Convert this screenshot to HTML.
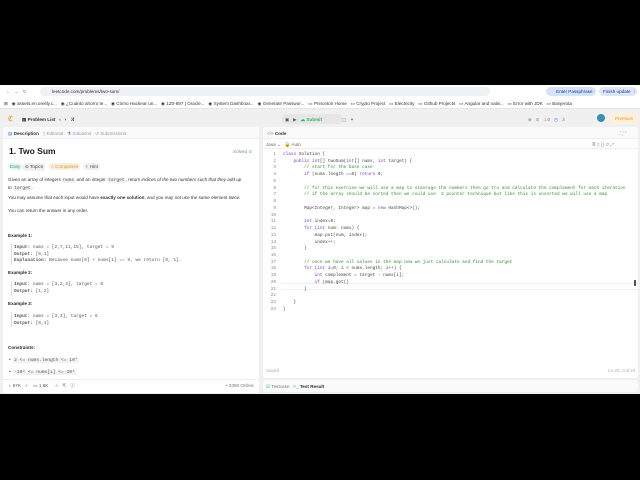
<!DOCTYPE html>
<html><head><meta charset="utf-8"><style>
*{margin:0;padding:0;box-sizing:border-box}
body{width:640px;height:480px;background:#000;position:relative;overflow:hidden;font-family:"Liberation Sans",sans-serif;color:#262626}
.a{position:absolute;white-space:nowrap}
#br{position:absolute;left:0;top:85px;width:640px;height:309px;background:#f0f0f0}
.t{font-size:4.6px}
.mono{font-family:"Liberation Mono",monospace}
.code{font-size:4.4px;font-family:"Liberation Mono",monospace;line-height:6.74px}
.ln{color:#888;text-align:right;width:10px}
.k{color:#7a3ec1}.c{color:#3a8a3a}.n{color:#444}
.cd{background:#f2f2f2;border-radius:1px;padding:0 1px;color:#555}
</style></head><body>
<div id="br"></div>
<div class="a" style="left:0;top:85px;width:640px;height:13px;background:#fff"></div>
<div class="a t" style="left:6px;top:89px;color:#777">←&nbsp;&nbsp;&nbsp;→&nbsp;&nbsp;&nbsp;↻</div>
<div class="a" style="left:40px;top:87px;width:450px;height:9px;background:#eef1f6;border-radius:5px"></div>
<div class="a t" style="left:52px;top:89px;color:#333">leetcode.com/problems/two-sum/</div>
<div class="a" style="left:546px;top:87px;width:50px;height:9px;background:#d6e2fb;border-radius:5px"></div>
<div class="a t" style="left:556px;top:89px;color:#1a3d7c">Enter Passphrase</div>
<div class="a" style="left:599px;top:87px;width:38px;height:9px;background:#dde6f7;border-radius:5px"></div>
<div class="a t" style="left:603px;top:89px;color:#1a3d7c">Finish update ⋮</div>
<div class="a" style="left:0;top:98px;width:640px;height:11px;background:#fff;border-bottom:1px solid #e5e5e5"></div>
<div class="a t" style="left:4px;top:101px;color:#333;word-spacing:0">⊞&nbsp;&nbsp;&nbsp;◉ assets.en.oreilly.c...&nbsp;&nbsp;&nbsp;◉ ¿Cuánto ahorro te...&nbsp;&nbsp;&nbsp;◉ Cómo Hackear un...&nbsp;&nbsp;&nbsp;◉ 1Z0-897 | Oracle...&nbsp;&nbsp;&nbsp;◉ System Dashboar...&nbsp;&nbsp;&nbsp;◉ Generate Passwor...&nbsp;&nbsp;&nbsp;▭ Princeton Home&nbsp;&nbsp;&nbsp;▭ Crypto Project&nbsp;&nbsp;&nbsp;▭ Electricity&nbsp;&nbsp;&nbsp;▭ Github Projects&nbsp;&nbsp;&nbsp;▭ Angular and nativ...&nbsp;&nbsp;&nbsp;▭ Error with JDK&nbsp;&nbsp;&nbsp;▭ Banjerota</div>
<div class="a" style="left:8px;top:115px;font-size:7px;color:#e8a33b;font-weight:bold">ℭ</div>
<div class="a t" style="left:22px;top:117px;color:#333;font-weight:bold">▤ Problem List&nbsp;&nbsp;&nbsp;‹&nbsp;&nbsp;&nbsp;›&nbsp;&nbsp;&nbsp;⤨</div>
<div class="a" style="left:282px;top:114px;width:60px;height:10px;background:#e6e6e6;border-radius:3px"></div>
<div class="a t" style="left:285px;top:117px;color:#555">▣&nbsp;&nbsp;&nbsp;▶&nbsp;&nbsp;&nbsp;<span style="color:#2db55d;font-weight:bold">☁ Submit</span></div>
<div class="a t" style="left:342px;top:117px;color:#666">▢&nbsp;&nbsp;&nbsp;<span style="color:#4f6df0">✦</span></div>
<div class="a t" style="left:528px;top:117px;color:#777">⊛&nbsp;&nbsp;&nbsp;⊙&nbsp;&nbsp;&nbsp;♨0&nbsp;&nbsp;&nbsp;<span style="color:#2f80ed">◷</span>&nbsp;&nbsp;&nbsp;♙</div>
<div class="a" style="left:597px;top:114px;width:8px;height:8px;border-radius:50%;background:#3b8fb5"></div>
<div class="a" style="left:610px;top:113px;width:28px;height:11px;background:#fdf0dc;border-radius:3px"></div>
<div class="a t" style="left:615px;top:116px;color:#e39a2a">Premium</div>
<div class="a" style="left:3px;top:127px;width:256px;height:266px;background:#fff;border-radius:3px"></div>
<div class="a" style="left:3px;top:127px;width:256px;height:12px;background:#fafafa;border-bottom:1px solid #eee;border-radius:3px 3px 0 0"></div>
<div class="a t" style="left:8px;top:131px;color:#999"><span style="color:#2f80ed">▤</span> <b style="color:#333">Description</b>&nbsp;&nbsp;&nbsp;<span style="color:#e8a33b">▯</span> Editorial&nbsp;&nbsp;&nbsp;<span style="color:#2f80ed">⚗</span> Solutions&nbsp;&nbsp;&nbsp;↺ Submissions</div>
<div class="a" style="left:9px;top:146px;font-size:8.5px;font-weight:bold;color:#1a1a1a">1. Two Sum</div>
<div class="a t" style="left:233px;top:149px;color:#888">Solved <span style="color:#2db55d">⊙</span></div>
<div class="a t" style="left:8px;top:163px;color:#2a9c8f;background:#e9f5f3;padding:1px 2px;border-radius:3px">Easy</div>
<div class="a t" style="left:23px;top:163px;color:#444;background:#f0f0f0;padding:1px 2px;border-radius:3px">⊘ Topics</div>
<div class="a t" style="left:49px;top:163px;color:#d89a2f;background:#f7efe0;padding:1px 2px;border-radius:3px">⌂ Companies</div>
<div class="a t" style="left:83px;top:163px;color:#444;background:#f0f0f0;padding:1px 2px;border-radius:3px">♀ Hint</div>
<div class="a t" style="left:8px;top:176px;line-height:7px;color:#333">Given an array of integers <span class="cd mono">nums</span> and an integer <span class="cd mono">target</span>, return <i>indices of the two numbers such that they add up</i><br><i>to</i> <span class="cd mono">target</span>.</div>
<div class="a t" style="left:8px;top:195px;color:#333">You may assume that each input would have <b>exactly one solution</b>, and you may not use the same element twice.</div>
<div class="a t" style="left:8px;top:208px;color:#333">You can return the answer in any order.</div>
<div class="a t" style="left:8px;top:233px;font-weight:bold">Example 1:</div>
<div class="a" style="left:11px;top:243px;width:1px;height:22px;background:#ddd"></div>
<div class="a mono" style="left:14px;top:245px;font-size:4.5px;line-height:6.5px;color:#555"><b>Input:</b> nums = [2,7,11,15], target = 9<br><b>Output:</b> [0,1]<br><b>Explanation:</b> Because nums[0] + nums[1] == 9, we return [0, 1].</div>
<div class="a t" style="left:8px;top:270px;font-weight:bold">Example 2:</div>
<div class="a" style="left:11px;top:281px;width:1px;height:15px;background:#ddd"></div>
<div class="a mono" style="left:14px;top:282px;font-size:4.5px;line-height:6.5px;color:#555"><b>Input:</b> nums = [3,2,4], target = 6<br><b>Output:</b> [1,2]</div>
<div class="a t" style="left:8px;top:301px;font-weight:bold">Example 3:</div>
<div class="a" style="left:11px;top:312px;width:1px;height:15px;background:#ddd"></div>
<div class="a mono" style="left:14px;top:314px;font-size:4.5px;line-height:6.5px;color:#555"><b>Input:</b> nums = [3,3], target = 6<br><b>Output:</b> [0,1]</div>
<div class="a t" style="left:8px;top:345px;font-weight:bold">Constraints:</div>
<div class="a t" style="left:9px;top:357px;color:#555">•&nbsp; <span class="cd mono">2 &lt;= nums.length &lt;= 10⁴</span></div>
<div class="a t" style="left:9px;top:369px;color:#555">•&nbsp; <span class="cd mono">-10⁹ &lt;= nums[i] &lt;= 10⁹</span></div>
<div class="a" style="left:3px;top:379px;width:256px;height:1px;background:#eee"></div>
<div class="a t" style="left:8px;top:383px;color:#555">♁ 67K&nbsp;&nbsp;&nbsp;♁&nbsp;&nbsp;&nbsp;&nbsp;▭ 1.6K&nbsp;&nbsp;&nbsp;&nbsp;&nbsp;☆&nbsp;&nbsp;&nbsp;⇱&nbsp;&nbsp;&nbsp;ⓘ</div>
<div class="a t" style="left:226px;top:383px;color:#777"><span style="color:#2db55d">•</span> 3380 Online</div>
<div class="a" style="left:263px;top:127px;width:375px;height:251px;background:#fff;border-radius:3px"></div>
<div class="a" style="left:263px;top:127px;width:375px;height:12px;background:#fafafa;border-bottom:1px solid #eee;border-radius:3px 3px 0 0"></div>
<div class="a t" style="left:267px;top:131px;color:#333"><span style="color:#2db55d">&lt;/&gt;</span> <b>Code</b></div>
<div class="a t" style="left:620px;top:131px;color:#999">⛶ ⌃</div>
<div class="a t" style="left:266px;top:142px;color:#666">Java ⌄&nbsp;&nbsp;&nbsp;🔒 Auto</div>
<div class="a t" style="left:592px;top:142px;color:#888">≣ ▯ {} ↺ ⤢</div>
<div class="a" style="left:263px;top:148px;width:375px;height:1px;background:#eee"></div>
<div class="a" style="left:281px;top:283px;width:357px;height:7px;border-top:1px solid #eee;border-bottom:1px solid #eee"></div>
<div class="a code ln" style="left:266px;top:152px">1<br>2<br>3<br>4<br>5<br>6<br>7<br>8<br>9<br>10<br>11<br>12<br>13<br>14<br>15<br>16<br>17<br>18<br>19<br>20<br>21<br>22<br>23<br>24</div>
<div class="a code n" style="left:283px;top:152px"><span class="k">class</span> Solution {<br>&nbsp;&nbsp;&nbsp;&nbsp;<span class="k">public</span> <span class="k">int</span>[] twoSum(<span class="k">int</span>[] nums, <span class="k">int</span> target) {<br>&nbsp;&nbsp;&nbsp;&nbsp;&nbsp;&nbsp;&nbsp;&nbsp;<span class="c">// start for the base case</span><br>&nbsp;&nbsp;&nbsp;&nbsp;&nbsp;&nbsp;&nbsp;&nbsp;<span class="k">if</span> (nums.lnegth ==0) <span class="k">return</span> 0;<br><br>&nbsp;&nbsp;&nbsp;&nbsp;&nbsp;&nbsp;&nbsp;&nbsp;<span class="c">// for this exercise we will use a map to staorage the numbers then go tru and calculate the complement for each iteration</span><br>&nbsp;&nbsp;&nbsp;&nbsp;&nbsp;&nbsp;&nbsp;&nbsp;<span class="c">// if the array should be sorted then we could use&nbsp; 2 pointer technique but like this is unsorted we will use a map</span><br><br>&nbsp;&nbsp;&nbsp;&nbsp;&nbsp;&nbsp;&nbsp;&nbsp;Map&lt;Integer, Integer&gt; map = <span class="k">new</span> HashMap&lt;&gt;();<br><br>&nbsp;&nbsp;&nbsp;&nbsp;&nbsp;&nbsp;&nbsp;&nbsp;<span class="k">int</span> index=0;<br>&nbsp;&nbsp;&nbsp;&nbsp;&nbsp;&nbsp;&nbsp;&nbsp;<span class="k">for</span> (<span class="k">int</span> num: nums) {<br>&nbsp;&nbsp;&nbsp;&nbsp;&nbsp;&nbsp;&nbsp;&nbsp;&nbsp;&nbsp;&nbsp;&nbsp;map.put(num, index);<br>&nbsp;&nbsp;&nbsp;&nbsp;&nbsp;&nbsp;&nbsp;&nbsp;&nbsp;&nbsp;&nbsp;&nbsp;index++;<br>&nbsp;&nbsp;&nbsp;&nbsp;&nbsp;&nbsp;&nbsp;&nbsp;}<br><br>&nbsp;&nbsp;&nbsp;&nbsp;&nbsp;&nbsp;&nbsp;&nbsp;<span class="c">// once we have all values in the map now we just calculate and find the target</span><br>&nbsp;&nbsp;&nbsp;&nbsp;&nbsp;&nbsp;&nbsp;&nbsp;<span class="k">for</span> (<span class="k">int</span> i=0; i &lt; nums.length; i++) {<br>&nbsp;&nbsp;&nbsp;&nbsp;&nbsp;&nbsp;&nbsp;&nbsp;&nbsp;&nbsp;&nbsp;&nbsp;<span class="k">int</span> complement = target - nums[i];<br>&nbsp;&nbsp;&nbsp;&nbsp;&nbsp;&nbsp;&nbsp;&nbsp;&nbsp;&nbsp;&nbsp;&nbsp;<span class="k">if</span> (map.get()<br>&nbsp;&nbsp;&nbsp;&nbsp;&nbsp;&nbsp;&nbsp;&nbsp;}<br><br>&nbsp;&nbsp;&nbsp;&nbsp;}<br>}</div>
<div class="a" style="left:634px;top:280px;width:2px;height:6px;background:#555"></div>
<div class="a t" style="left:266px;top:368px;color:#aaa">Saved</div>
<div class="a t" style="left:608px;top:368px;color:#aaa">Ln 20, Col 24</div>
<div class="a" style="left:263px;top:380px;width:375px;height:12px;background:#fafafa;border-radius:3px"></div>
<div class="a t" style="left:266px;top:384px;color:#777"><span style="color:#2db55d">☑</span> Testcase&nbsp;&nbsp;&nbsp;<span style="color:#2db55d">&gt;_</span> <b style="color:#333">Test Result</b></div>
</body></html>
